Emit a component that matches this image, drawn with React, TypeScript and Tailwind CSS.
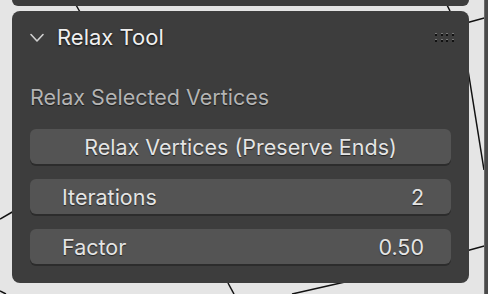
import React from 'react'

const font = { fontFamily: 'Inter, "Noto Sans", sans-serif' }

function Grip() {
  return (
    <div className="grid grid-cols-4 gap-x-[3.7px] gap-y-[3px] mr-[-3px]">
      {Array.from({ length: 8 }).map((_, i) => (
        <div key={i} className="w-[2px] h-[2px] bg-[#111] border-t border-[#777] box-content" />
      ))}
    </div>
  )
}

function Field({ label, value }: { label: string; value: string }) {
  return (
    <div className="h-[35px] rounded-[6px] bg-[#545454] shadow-[0_2px_0_#2c2c2c] flex items-center justify-between pl-[32px] pr-[27px] pt-[1px] text-[21.5px] text-[#e4e4e4] [text-shadow:0_1px_1px_rgba(0,0,0,0.6)]">
      <span>{label}</span>
      <span>{value}</span>
    </div>
  )
}

export default function App() {
  return (
    <div className="relative w-[488px] h-[294px] overflow-hidden bg-[#e5e5e5]" style={font}>
      {/* viewport mesh edges */}
      <svg className="absolute inset-0" width="488" height="294" viewBox="0 0 488 294">
        <g stroke="#111" strokeWidth="1.5" fill="none">
          <line x1="0" y1="219" x2="14" y2="211" />
          <line x1="0" y1="291" x2="6" y2="294" />
          <line x1="228" y1="283" x2="234" y2="294" />
          <line x1="345" y1="282" x2="292" y2="294" />
          <line x1="466" y1="251" x2="488" y2="245" />
          <line x1="466" y1="23" x2="488" y2="17" />
          <line x1="468" y1="70" x2="484" y2="170" />
          <line x1="446" y1="3" x2="450" y2="11" />
          <line x1="76" y1="5" x2="80" y2="12" />
        </g>
      </svg>
      <div className="absolute right-0 top-0 w-[4px] h-full bg-[#4a4a4a] border-l border-[#6a6a6a]" />

      <div className="relative pl-[12px] w-[469px]">
        <div className="h-[6px] bg-[#3d3d3d] rounded-b-[8px] mb-[5px]" />
        <div className="bg-[#3d3d3d] rounded-[8px] h-[272px] px-[18px]">
          <div className="h-[52px] flex items-center justify-between">
            <div className="flex items-center">
              <svg width="14" height="10" viewBox="0 0 14 10" className="mr-[13px] mt-[1px]">
                <path d="M1 1.5 L7 8 L13 1.5" stroke="#d0d0d0" strokeWidth="1.6" fill="none" strokeLinecap="round" strokeLinejoin="round" />
              </svg>
              <span className="text-[22px] text-[#efefef] [text-shadow:0_1px_2px_rgba(0,0,0,0.8)]">Relax Tool</span>
            </div>
            <Grip />
          </div>
          <div className="h-[63px] flex items-center pt-[6px] text-[21.5px] text-[#b4b4b4] [text-shadow:0_1px_1px_rgba(0,0,0,0.6)]">
            Relax Selected Vertices
          </div>
          <div className="flex flex-col gap-[15px] mt-[3px]">
            <div className="h-[35px] rounded-[6px] bg-[#545454] shadow-[0_2px_0_#2c2c2c] flex items-center justify-center pt-[1px] text-[21.5px] text-[#e4e4e4] [text-shadow:0_1px_1px_rgba(0,0,0,0.6)]">
              Relax Vertices (Preserve Ends)
            </div>
            <Field label="Iterations" value="2" />
            <Field label="Factor" value="0.50" />
          </div>
        </div>
      </div>
    </div>
  )
}
